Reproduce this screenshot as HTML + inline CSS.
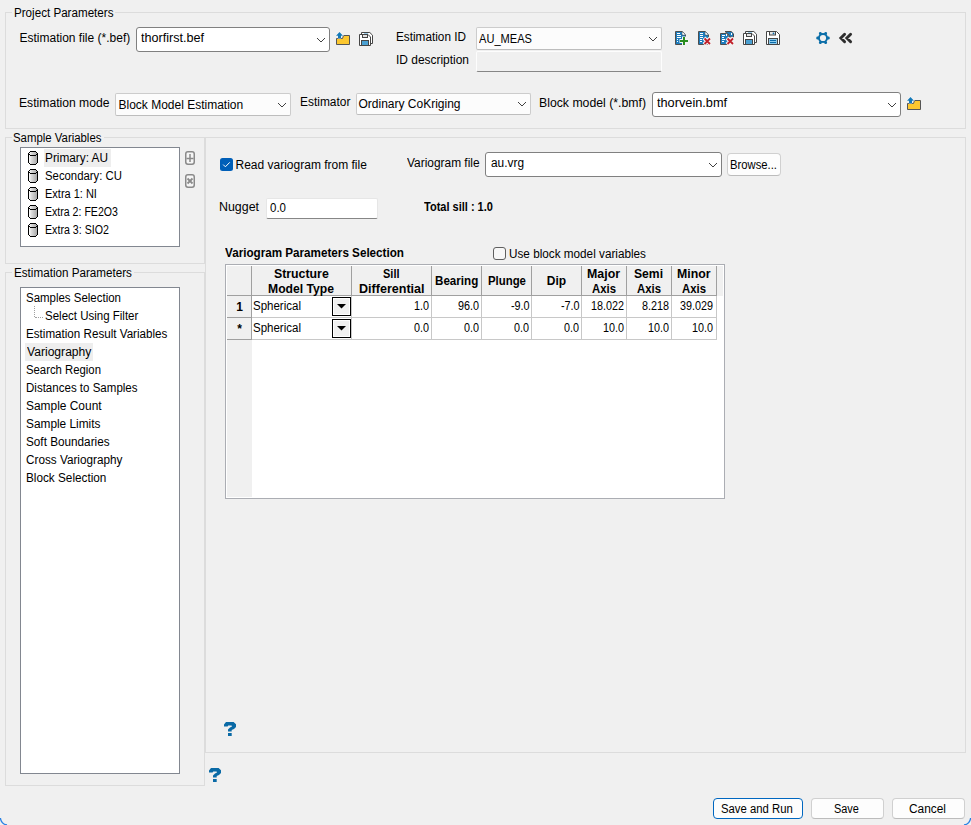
<!DOCTYPE html>
<html><head><meta charset="utf-8"><style>
html,body{margin:0;padding:0}
body{width:971px;height:825px;background:#f0f0f0;position:relative;overflow:hidden;font-family:"Liberation Sans",sans-serif;font-size:12px;color:#000}
.a{position:absolute}
.t{position:absolute;white-space:nowrap;line-height:14px;transform-origin:0 0;font-size:12px}
</style></head><body>
<div class="a" style="left:205px;top:137px;width:761px;height:616px;box-sizing:border-box;border:1px solid #dcdcdc"></div>
<div class="a" style="left:5px;top:12px;width:961px;height:117px;box-sizing:border-box;border:1px solid #dcdcdc"></div>
<div class="a" style="left:12px;top:12px;width:103px;height:1px;background:#f0f0f0"></div>
<div class="a" style="left:5px;top:137px;width:200px;height:127px;box-sizing:border-box;border:1px solid #dcdcdc"></div>
<div class="a" style="left:12px;top:137px;width:92px;height:1px;background:#f0f0f0"></div>
<div class="a" style="left:5px;top:272px;width:200px;height:514px;box-sizing:border-box;border:1px solid #dcdcdc"></div>
<div class="a" style="left:12px;top:272px;width:122px;height:1px;background:#f0f0f0"></div>
<div class="a" style="left:136px;top:27px;width:194px;height:25px;box-sizing:border-box;border:1px solid #808080;border-radius:3px;background:#fff"></div>
<svg class="a" style="left:316px;top:37px" width="10" height="6" viewBox="0 0 10 6"><path d="M1 1 L5 5 L9 1" fill="none" stroke="#404040" stroke-width="1"/></svg>
<div class="a" style="left:476px;top:27px;width:186px;height:23px;box-sizing:border-box;border:1px solid #cccccc;border-bottom-color:#bdbdbd;border-radius:2px;background:#fcfcfc"></div>
<svg class="a" style="left:648px;top:36px" width="10" height="6" viewBox="0 0 10 6"><path d="M1 1 L5 5 L9 1" fill="none" stroke="#404040" stroke-width="1"/></svg>
<div class="a" style="left:476px;top:51px;width:186px;height:21px;box-sizing:border-box;border:1px solid #fdfdfd;border-bottom:1px solid #868686;border-radius:2px;background:#f0f0f0"></div>
<div class="a" style="left:115px;top:93px;width:176px;height:23px;box-sizing:border-box;border:1px solid #cccccc;border-bottom-color:#bdbdbd;border-radius:2px;background:#fcfcfc"></div>
<svg class="a" style="left:277px;top:102px" width="10" height="6" viewBox="0 0 10 6"><path d="M1 1 L5 5 L9 1" fill="none" stroke="#404040" stroke-width="1"/></svg>
<div class="a" style="left:356px;top:93px;width:175px;height:22px;box-sizing:border-box;border:1px solid #cccccc;border-bottom-color:#bdbdbd;border-radius:2px;background:#fcfcfc"></div>
<svg class="a" style="left:517px;top:101px" width="10" height="6" viewBox="0 0 10 6"><path d="M1 1 L5 5 L9 1" fill="none" stroke="#404040" stroke-width="1"/></svg>
<div class="a" style="left:652px;top:92px;width:249px;height:25px;box-sizing:border-box;border:1px solid #808080;border-radius:3px;background:#fff"></div>
<svg class="a" style="left:887px;top:102px" width="10" height="6" viewBox="0 0 10 6"><path d="M1 1 L5 5 L9 1" fill="none" stroke="#404040" stroke-width="1"/></svg>
<div class="a" style="left:20px;top:147px;width:160px;height:100px;box-sizing:border-box;border:1px solid #828790;background:#fff"></div>
<div class="a" style="left:44px;top:149px;width:67px;height:18px;background:#eeeeee"></div>
<svg class="a" style="left:28px;top:151px" width="10" height="14" viewBox="0 0 10 14" shape-rendering="crispEdges">
<defs><linearGradient id="cg0" x1="0" x2="1"><stop offset="0" stop-color="#ffffff"/><stop offset="0.3" stop-color="#dcdcdc"/><stop offset="1" stop-color="#a8a8a8"/></linearGradient></defs>
<rect x="1" y="1" width="8" height="12" fill="url(#cg0)"/>
<rect x="2" y="0" width="6" height="1" fill="#000"/><rect x="1" y="1" width="1" height="1" fill="#000"/><rect x="8" y="1" width="1" height="1" fill="#000"/>
<rect x="0" y="2" width="1" height="10" fill="#000"/><rect x="9" y="2" width="1" height="10" fill="#000"/>
<rect x="1" y="3" width="1" height="1" fill="#000"/><rect x="8" y="3" width="1" height="1" fill="#000"/>
<rect x="2" y="4" width="6" height="1" fill="#000"/>
<rect x="1" y="12" width="1" height="1" fill="#000"/><rect x="8" y="12" width="1" height="1" fill="#000"/>
<rect x="2" y="13" width="6" height="1" fill="#000"/></svg>
<svg class="a" style="left:28px;top:169px" width="10" height="14" viewBox="0 0 10 14" shape-rendering="crispEdges">
<defs><linearGradient id="cg1" x1="0" x2="1"><stop offset="0" stop-color="#ffffff"/><stop offset="0.3" stop-color="#dcdcdc"/><stop offset="1" stop-color="#a8a8a8"/></linearGradient></defs>
<rect x="1" y="1" width="8" height="12" fill="url(#cg1)"/>
<rect x="2" y="0" width="6" height="1" fill="#000"/><rect x="1" y="1" width="1" height="1" fill="#000"/><rect x="8" y="1" width="1" height="1" fill="#000"/>
<rect x="0" y="2" width="1" height="10" fill="#000"/><rect x="9" y="2" width="1" height="10" fill="#000"/>
<rect x="1" y="3" width="1" height="1" fill="#000"/><rect x="8" y="3" width="1" height="1" fill="#000"/>
<rect x="2" y="4" width="6" height="1" fill="#000"/>
<rect x="1" y="12" width="1" height="1" fill="#000"/><rect x="8" y="12" width="1" height="1" fill="#000"/>
<rect x="2" y="13" width="6" height="1" fill="#000"/></svg>
<svg class="a" style="left:28px;top:187px" width="10" height="14" viewBox="0 0 10 14" shape-rendering="crispEdges">
<defs><linearGradient id="cg2" x1="0" x2="1"><stop offset="0" stop-color="#ffffff"/><stop offset="0.3" stop-color="#dcdcdc"/><stop offset="1" stop-color="#a8a8a8"/></linearGradient></defs>
<rect x="1" y="1" width="8" height="12" fill="url(#cg2)"/>
<rect x="2" y="0" width="6" height="1" fill="#000"/><rect x="1" y="1" width="1" height="1" fill="#000"/><rect x="8" y="1" width="1" height="1" fill="#000"/>
<rect x="0" y="2" width="1" height="10" fill="#000"/><rect x="9" y="2" width="1" height="10" fill="#000"/>
<rect x="1" y="3" width="1" height="1" fill="#000"/><rect x="8" y="3" width="1" height="1" fill="#000"/>
<rect x="2" y="4" width="6" height="1" fill="#000"/>
<rect x="1" y="12" width="1" height="1" fill="#000"/><rect x="8" y="12" width="1" height="1" fill="#000"/>
<rect x="2" y="13" width="6" height="1" fill="#000"/></svg>
<svg class="a" style="left:28px;top:205px" width="10" height="14" viewBox="0 0 10 14" shape-rendering="crispEdges">
<defs><linearGradient id="cg3" x1="0" x2="1"><stop offset="0" stop-color="#ffffff"/><stop offset="0.3" stop-color="#dcdcdc"/><stop offset="1" stop-color="#a8a8a8"/></linearGradient></defs>
<rect x="1" y="1" width="8" height="12" fill="url(#cg3)"/>
<rect x="2" y="0" width="6" height="1" fill="#000"/><rect x="1" y="1" width="1" height="1" fill="#000"/><rect x="8" y="1" width="1" height="1" fill="#000"/>
<rect x="0" y="2" width="1" height="10" fill="#000"/><rect x="9" y="2" width="1" height="10" fill="#000"/>
<rect x="1" y="3" width="1" height="1" fill="#000"/><rect x="8" y="3" width="1" height="1" fill="#000"/>
<rect x="2" y="4" width="6" height="1" fill="#000"/>
<rect x="1" y="12" width="1" height="1" fill="#000"/><rect x="8" y="12" width="1" height="1" fill="#000"/>
<rect x="2" y="13" width="6" height="1" fill="#000"/></svg>
<svg class="a" style="left:28px;top:223px" width="10" height="14" viewBox="0 0 10 14" shape-rendering="crispEdges">
<defs><linearGradient id="cg4" x1="0" x2="1"><stop offset="0" stop-color="#ffffff"/><stop offset="0.3" stop-color="#dcdcdc"/><stop offset="1" stop-color="#a8a8a8"/></linearGradient></defs>
<rect x="1" y="1" width="8" height="12" fill="url(#cg4)"/>
<rect x="2" y="0" width="6" height="1" fill="#000"/><rect x="1" y="1" width="1" height="1" fill="#000"/><rect x="8" y="1" width="1" height="1" fill="#000"/>
<rect x="0" y="2" width="1" height="10" fill="#000"/><rect x="9" y="2" width="1" height="10" fill="#000"/>
<rect x="1" y="3" width="1" height="1" fill="#000"/><rect x="8" y="3" width="1" height="1" fill="#000"/>
<rect x="2" y="4" width="6" height="1" fill="#000"/>
<rect x="1" y="12" width="1" height="1" fill="#000"/><rect x="8" y="12" width="1" height="1" fill="#000"/>
<rect x="2" y="13" width="6" height="1" fill="#000"/></svg>
<svg class="a" style="left:185px;top:151px" width="10" height="14" viewBox="0 0 10 14">
<rect x="0.75" y="0.75" width="8.5" height="12.5" rx="2.2" fill="#f6f6f6" stroke="#8a8a8a" stroke-width="1.5"/>
<path d="M5 3 V11 M1.5 7.5 H8.5" stroke="#8a8a8a" stroke-width="1.5"/></svg>
<svg class="a" style="left:185px;top:174px" width="10" height="14" viewBox="0 0 10 14">
<rect x="0.75" y="0.75" width="8.5" height="12.5" rx="2.2" fill="#f6f6f6" stroke="#8a8a8a" stroke-width="1.5"/>
<path d="M2.5 4.5 L7.5 9.5 M7.5 4.5 L2.5 9.5" stroke="#8a8a8a" stroke-width="1.8"/></svg>
<div class="a" style="left:20px;top:287px;width:160px;height:487px;box-sizing:border-box;border:1px solid #828790;background:#fff"></div>
<div class="a" style="left:25px;top:343px;width:68px;height:18px;background:#eeeeee"></div>
<div class="a" style="left:34px;top:306px;width:0;height:11px;border-left:1px dotted #a0a0a0"></div>
<div class="a" style="left:35px;top:317px;width:8px;height:0;border-top:1px dotted #a0a0a0"></div>
<svg class="a" style="left:220px;top:158px" width="13" height="13" viewBox="0 0 13 13">
<rect x="0" y="0" width="13" height="13" rx="2.5" fill="#005fb8"/>
<path d="M3.2 6.6 L5.4 8.8 L9.8 4.3" fill="none" stroke="#fff" stroke-width="1"/></svg>
<div class="a" style="left:485px;top:152px;width:237px;height:25px;box-sizing:border-box;border:1px solid #808080;border-radius:3px;background:#fff"></div>
<svg class="a" style="left:708px;top:162px" width="10" height="6" viewBox="0 0 10 6"><path d="M1 1 L5 5 L9 1" fill="none" stroke="#404040" stroke-width="1"/></svg>
<div class="a" style="left:727px;top:153px;width:54px;height:23px;box-sizing:border-box;border:1px solid #d0d0d0;border-bottom-color:#bcbcbc;border-radius:4px;background:#fdfdfd"></div>
<div class="a" style="left:266px;top:198px;width:112px;height:21px;box-sizing:border-box;border:1px solid #e6e6e6;border-bottom:1px solid #868686;border-radius:2px;background:#fff"></div>
<svg class="a" style="left:493px;top:247px" width="13" height="13" viewBox="0 0 13 13">
<rect x="0.5" y="0.5" width="12" height="12" rx="2.5" fill="#f7f7f7" stroke="#5f5f5f"/></svg>
<div class="a" style="left:225px;top:264px;width:500px;height:235px;box-sizing:border-box;border:1px solid #abadb3;background:#fff"></div>
<div class="a" style="left:227px;top:266px;width:496px;height:30px;background:#f0f0f0"></div>
<div class="a" style="left:227px;top:266px;width:25px;height:231px;background:#f0f0f0"></div>
<div class="a" style="left:251px;top:266px;width:1px;height:30px;background:#a0a0a0"></div>
<div class="a" style="left:351px;top:266px;width:1px;height:30px;background:#a0a0a0"></div>
<div class="a" style="left:431px;top:266px;width:1px;height:30px;background:#a0a0a0"></div>
<div class="a" style="left:481px;top:266px;width:1px;height:30px;background:#a0a0a0"></div>
<div class="a" style="left:531px;top:266px;width:1px;height:30px;background:#a0a0a0"></div>
<div class="a" style="left:581px;top:266px;width:1px;height:30px;background:#a0a0a0"></div>
<div class="a" style="left:626px;top:266px;width:1px;height:30px;background:#a0a0a0"></div>
<div class="a" style="left:671px;top:266px;width:1px;height:30px;background:#a0a0a0"></div>
<div class="a" style="left:716px;top:266px;width:1px;height:30px;background:#a0a0a0"></div>
<div class="a" style="left:227px;top:295px;width:490px;height:1px;background:#a0a0a0"></div>
<div class="a" style="left:227px;top:317px;width:25px;height:1px;background:#a0a0a0"></div>
<div class="a" style="left:252px;top:317px;width:465px;height:1px;background:#c8c8c8"></div>
<div class="a" style="left:227px;top:339px;width:25px;height:1px;background:#a0a0a0"></div>
<div class="a" style="left:252px;top:339px;width:465px;height:1px;background:#c8c8c8"></div>
<div class="a" style="left:251px;top:296px;width:1px;height:44px;background:#a0a0a0"></div>
<div class="a" style="left:351px;top:296px;width:1px;height:44px;background:#c8c8c8"></div>
<div class="a" style="left:431px;top:296px;width:1px;height:44px;background:#c8c8c8"></div>
<div class="a" style="left:481px;top:296px;width:1px;height:44px;background:#c8c8c8"></div>
<div class="a" style="left:531px;top:296px;width:1px;height:44px;background:#c8c8c8"></div>
<div class="a" style="left:581px;top:296px;width:1px;height:44px;background:#c8c8c8"></div>
<div class="a" style="left:626px;top:296px;width:1px;height:44px;background:#c8c8c8"></div>
<div class="a" style="left:671px;top:296px;width:1px;height:44px;background:#c8c8c8"></div>
<div class="a" style="left:716px;top:296px;width:1px;height:44px;background:#c8c8c8"></div>
<svg class="a" style="left:332px;top:297px" width="19" height="19" viewBox="0 0 19 19" shape-rendering="crispEdges">
<rect x="0" y="0" width="19" height="19" fill="#000"/><rect x="1" y="1" width="17" height="17" fill="#fff"/><rect x="2" y="2" width="15" height="15" fill="#f0f0f0"/>
<path d="M5 7 H14 L9.5 11.5 Z" fill="#000" shape-rendering="geometricPrecision"/></svg>
<svg class="a" style="left:332px;top:319px" width="19" height="19" viewBox="0 0 19 19" shape-rendering="crispEdges">
<rect x="0" y="0" width="19" height="19" fill="#000"/><rect x="1" y="1" width="17" height="17" fill="#fff"/><rect x="2" y="2" width="15" height="15" fill="#f0f0f0"/>
<path d="M5 7 H14 L9.5 11.5 Z" fill="#000" shape-rendering="geometricPrecision"/></svg>
<svg class="a" style="left:221px;top:719px" width="18" height="20" viewBox="0 0 18 20"><path d="M3 7.6 L3 5.4 L5 3 L12.6 3 L15 5.2 L15 8 L13 10 L10.7 11 L10.7 12.6 L7 12.6 L7 10.4 L9 8.6 L11 7.6 L10.6 6.6 L7.2 6.6 L6.6 7.6 Z" fill="#0a6aa6"/><rect x="7" y="14" width="3.7" height="3" fill="#0a6aa6"/></svg>
<svg class="a" style="left:206px;top:765px" width="18" height="20" viewBox="0 0 18 20"><path d="M3 7.6 L3 5.4 L5 3 L12.6 3 L15 5.2 L15 8 L13 10 L10.7 11 L10.7 12.6 L7 12.6 L7 10.4 L9 8.6 L11 7.6 L10.6 6.6 L7.2 6.6 L6.6 7.6 Z" fill="#0a6aa6"/><rect x="7" y="14" width="3.7" height="3" fill="#0a6aa6"/></svg>
<div class="a" style="left:713px;top:798px;width:90px;height:21px;box-sizing:border-box;border:1px solid #0067c0;border-radius:4px;background:#fdfdfd"></div>
<div class="a" style="left:811px;top:798px;width:73px;height:21px;box-sizing:border-box;border:1px solid #d0d0d0;border-bottom-color:#bcbcbc;border-radius:4px;background:#fdfdfd"></div>
<div class="a" style="left:892px;top:798px;width:73px;height:21px;box-sizing:border-box;border:1px solid #d0d0d0;border-bottom-color:#bcbcbc;border-radius:4px;background:#fdfdfd"></div>
<svg class="a" style="left:0;top:815px" width="12" height="10" viewBox="0 0 12 10"><path d="M0.4 3 Q1 9 7 10" fill="none" stroke="#2a82e4" stroke-width="1.3"/></svg>
<svg class="a" style="left:959px;top:815px" width="12" height="10" viewBox="0 0 12 10"><path d="M11.6 3 Q11 9 5 10" fill="none" stroke="#2a82e4" stroke-width="1.3"/></svg>
<svg class="a" style="left:673px;top:29px" width="18" height="18" viewBox="0 0 18 18">
<path d="M2.5 2.5 H9.2 L12.5 5.8 V15.5 H2.5 Z" fill="#1d7cbd" stroke="#4e4e4e"/>
<path d="M9.3 3 V6 H12" fill="#fff" stroke="#4e4e4e" stroke-width="0.8"/>
<path d="M9.3 3.3 L11.8 5.6 H9.3 Z" fill="#fff"/>
<rect x="4" y="4" width="3" height="1" fill="#fff"/><rect x="4" y="6" width="4" height="1" fill="#fff"/><rect x="4" y="8" width="4" height="1" fill="#fff"/>
<rect x="4" y="10" width="1" height="1" fill="#fff"/><rect x="4" y="12" width="1" height="1" fill="#fff"/>
<path d="M11 7.5 V16.5 M6.5 12 H15.5" stroke="#f4f4f4" stroke-width="4"/>
<path d="M11 8 V16 M7 12 H15" stroke="#2a8c1f" stroke-width="2"/>
</svg>
<svg class="a" style="left:696px;top:29px" width="18" height="18" viewBox="0 0 18 18">
<path d="M2.5 2.5 H9.2 L12.5 5.8 V15.5 H2.5 Z" fill="#1d7cbd" stroke="#4e4e4e"/>
<path d="M9.3 3 V6 H12" fill="#fff" stroke="#4e4e4e" stroke-width="0.8"/>
<path d="M9.3 3.3 L11.8 5.6 H9.3 Z" fill="#fff"/>
<rect x="4" y="4" width="3" height="1" fill="#fff"/><rect x="4" y="6" width="3" height="1" fill="#fff"/><rect x="4" y="8" width="3" height="1" fill="#fff"/>
<rect x="4" y="10" width="2" height="1" fill="#fff"/><rect x="4" y="12" width="2" height="1" fill="#fff"/>
<path d="M8 9 L14.5 15.5 M14.5 9 L8 15.5" stroke="#f4f4f4" stroke-width="4"/>
<path d="M8.5 9.5 L14 15 M14 9.5 L8.5 15" stroke="#c0202a" stroke-width="1.8"/>
</svg>
<svg class="a" style="left:718px;top:28px" width="18" height="18" viewBox="0 0 18 18">
<path d="M7 3.5 H13.2 L15.5 5.8 V9 H11 V7 Z" fill="#1d7cbd" stroke="#4e4e4e"/>
<path d="M2.5 5.5 H8.2 L10.5 7.8 V16.5 H2.5 Z" fill="#1d7cbd" stroke="#4e4e4e"/>
<rect x="8" y="6" width="1" height="2" fill="#fff"/><rect x="13" y="5" width="1" height="2" fill="#fff"/>
<rect x="4" y="7" width="3" height="1" fill="#fff"/><rect x="4" y="9" width="2" height="1" fill="#fff"/><rect x="4" y="11" width="3" height="1" fill="#fff"/><rect x="4" y="13" width="2" height="1" fill="#fff"/>
<path d="M9 10 L15.5 16.5 M15.5 10 L9 16.5" stroke="#f4f4f4" stroke-width="4"/>
<path d="M9.5 10.5 L15 16 M15 10.5 L9.5 16" stroke="#c0202a" stroke-width="1.8"/>
</svg>
<svg class="a" style="left:741px;top:29px" width="18" height="18" viewBox="0 0 18 18">
<path d="M4.5 2.5 H12.8 L15.5 5.2 V13.5 H4.5 Z" fill="#fff" stroke="#454545"/>
<rect x="7" y="3" width="4" height="1" fill="#9ccbe6"/>
<path d="M2.5 4.5 H11 L13.5 7 V15.5 H2.5 Z" fill="#fff" stroke="#454545"/>
<rect x="5.5" y="4.5" width="5" height="3" fill="#e4e4e4" stroke="#454545"/>
<rect x="4.5" y="10.5" width="7" height="5" fill="#4aa0d2" stroke="#454545"/>
</svg>
<svg class="a" style="left:764px;top:29px" width="18" height="18" viewBox="0 0 18 18">
<path d="M2.5 2.5 H12.5 L15.5 5.5 V15.5 H2.5 Z" fill="#fff" stroke="#454545"/>
<rect x="5.5" y="2.5" width="6" height="3.5" fill="#e6e6e6" stroke="#454545"/>
<circle cx="9.5" cy="4.4" r="0.9" fill="#0b6aa8"/>
<rect x="4.5" y="9.5" width="9" height="6" fill="#8dcbec" stroke="#454545"/>
<rect x="6" y="11" width="6" height="1" fill="#0b6aa8"/><rect x="6" y="13" width="6" height="1" fill="#0b6aa8"/>
</svg>
<svg class="a" style="left:814px;top:29px" width="18" height="18" viewBox="0 0 18 18">
<g fill="#0b6ea8">
<circle cx="9" cy="9" r="5"/>
<rect x="2.3" y="7.6" width="3" height="2.8" rx="1.2" transform="rotate(0 9 9)"/><rect x="2.3" y="7.6" width="3" height="2.8" rx="1.2" transform="rotate(60 9 9)"/><rect x="2.3" y="7.6" width="3" height="2.8" rx="1.2" transform="rotate(120 9 9)"/><rect x="2.3" y="7.6" width="3" height="2.8" rx="1.2" transform="rotate(180 9 9)"/><rect x="2.3" y="7.6" width="3" height="2.8" rx="1.2" transform="rotate(240 9 9)"/><rect x="2.3" y="7.6" width="3" height="2.8" rx="1.2" transform="rotate(300 9 9)"/>
</g>
<circle cx="9" cy="9" r="3.1" fill="#f0f0f0"/>
</svg>
<svg class="a" style="left:837px;top:29px" width="18" height="18" viewBox="0 0 18 18">
<path d="M7.6 5.3 L3.9 9 L7.6 12.7 M13.6 5.3 L9.9 9 L13.6 12.7" fill="none" stroke="#2e2e2e" stroke-width="2.9" stroke-linecap="round" stroke-linejoin="miter"/>
</svg>
<svg class="a" style="left:333px;top:29px" width="18" height="18" viewBox="0 0 18 18">
<path d="M3.5 9.5 H9.5 L10.5 6.5 H16.5 V15.5 H3.5 Z" fill="#fcc72f" stroke="#555"/>
<path d="M6.5 2.2 L10.8 6.8 H8.2 V9.5 H4.8 V6.8 H2.2 Z" fill="#f6f6f6"/><path d="M6.5 3 L10 6.7 H8 V9.3 H5 V6.7 H3 Z" fill="#1479b8"/>
</svg>
<svg class="a" style="left:357px;top:30px" width="18" height="18" viewBox="0 0 18 18">
<path d="M4.5 2.5 H12.8 L15.5 5.2 V13.5 H4.5 Z" fill="#fff" stroke="#454545"/>
<rect x="7" y="3" width="4" height="1" fill="#9ccbe6"/>
<path d="M2.5 4.5 H11 L13.5 7 V15.5 H2.5 Z" fill="#fff" stroke="#454545"/>
<rect x="5.5" y="4.5" width="5" height="3" fill="#e4e4e4" stroke="#454545"/>
<rect x="4.5" y="10.5" width="7" height="5" fill="#4aa0d2" stroke="#454545"/>
</svg>
<svg class="a" style="left:904px;top:94px" width="18" height="18" viewBox="0 0 18 18">
<path d="M3.5 9.5 H9.5 L10.5 6.5 H16.5 V15.5 H3.5 Z" fill="#fcc72f" stroke="#555"/>
<path d="M6.5 2.2 L10.8 6.8 H8.2 V9.5 H4.8 V6.8 H2.2 Z" fill="#f6f6f6"/><path d="M6.5 3 L10 6.7 H8 V9.3 H5 V6.7 H3 Z" fill="#1479b8"/>
</svg>

<div class="t" style="left:13.53px;top:6.00px;font-weight:400;transform:scaleX(0.9685);">Project Parameters</div>
<div class="t" style="left:13.05px;top:131.00px;font-weight:400;transform:scaleX(0.9493);">Sample Variables</div>
<div class="t" style="left:13.53px;top:266.00px;font-weight:400;transform:scaleX(0.9718);">Estimation Parameters</div>
<div class="t" style="left:140.95px;top:31.00px;font-weight:400;transform:scaleX(1.0503);">thorfirst.bef</div>
<div class="t" style="left:478.58px;top:32.00px;font-weight:400;transform:scaleX(0.9227);">AU_MEAS</div>
<div class="t" style="left:19.50px;top:31.00px;font-weight:400;">Estimation file (*.bef)</div>
<div class="t" style="left:396.02px;top:30.00px;font-weight:400;transform:scaleX(0.9807);">Estimation ID</div>
<div class="t" style="left:396.01px;top:53.00px;font-weight:400;transform:scaleX(0.9948);">ID description</div>
<div class="t" style="left:19.49px;top:95.50px;font-weight:400;transform:scaleX(1.0127);">Estimation mode</div>
<div class="t" style="left:118.50px;top:97.50px;font-weight:400;">Block Model Estimation</div>
<div class="t" style="left:299.51px;top:95.00px;font-weight:400;transform:scaleX(0.9942);">Estimator</div>
<div class="t" style="left:358.50px;top:97.00px;font-weight:400;">Ordinary CoKriging</div>
<div class="t" style="left:539.48px;top:95.50px;font-weight:400;transform:scaleX(1.0221);">Block model (*.bmf)</div>
<div class="t" style="left:656.94px;top:96.00px;font-weight:400;transform:scaleX(1.0610);">thorvein.bmf</div>
<div class="t" style="left:45.32px;top:151.00px;font-weight:400;transform:scaleX(0.9839);">Primary: AU</div>
<div class="t" style="left:45.35px;top:169.00px;font-weight:400;transform:scaleX(0.9456);">Secondary: CU</div>
<div class="t" style="left:45.38px;top:187.00px;font-weight:400;transform:scaleX(0.9158);">Extra 1: NI</div>
<div class="t" style="left:45.42px;top:205.00px;font-weight:400;transform:scaleX(0.8812);">Extra 2: FE2O3</div>
<div class="t" style="left:45.41px;top:223.00px;font-weight:400;transform:scaleX(0.8869);">Extra 3: SIO2</div>
<div class="t" style="left:26.34px;top:291.00px;font-weight:400;transform:scaleX(0.9554);">Samples Selection</div>
<div class="t" style="left:26.33px;top:327.00px;font-weight:400;transform:scaleX(0.9693);">Estimation Result Variables</div>
<div class="t" style="left:27.29px;top:345.00px;font-weight:400;transform:scaleX(1.0091);">Variography</div>
<div class="t" style="left:26.36px;top:363.00px;font-weight:400;transform:scaleX(0.9440);">Search Region</div>
<div class="t" style="left:26.34px;top:381.00px;font-weight:400;transform:scaleX(0.9612);">Distances to Samples</div>
<div class="t" style="left:26.31px;top:399.00px;font-weight:400;transform:scaleX(0.9940);">Sample Count</div>
<div class="t" style="left:26.31px;top:417.00px;font-weight:400;transform:scaleX(0.9884);">Sample Limits</div>
<div class="t" style="left:26.32px;top:435.00px;font-weight:400;transform:scaleX(0.9788);">Soft Boundaries</div>
<div class="t" style="left:26.32px;top:453.00px;font-weight:400;transform:scaleX(0.9786);">Cross Variography</div>
<div class="t" style="left:26.32px;top:471.00px;font-weight:400;transform:scaleX(0.9797);">Block Selection</div>
<div class="t" style="left:45.34px;top:309.00px;font-weight:400;transform:scaleX(0.9588);">Select Using Filter</div>
<div class="t" style="left:235.50px;top:157.50px;font-weight:400;">Read variogram from file</div>
<div class="t" style="left:406.51px;top:156.00px;font-weight:400;transform:scaleX(0.9925);">Variogram file</div>
<div class="t" style="left:490.51px;top:156.00px;font-weight:400;transform:scaleX(0.9889);">au.vrg</div>
<div class="t" style="left:729.86px;top:158.00px;font-weight:400;transform:scaleX(0.9385);">Browse...</div>
<div class="t" style="left:219.27px;top:200.00px;font-weight:400;transform:scaleX(1.0344);">Nugget</div>
<div class="t" style="left:270.04px;top:201.00px;font-weight:400;transform:scaleX(0.9562);">0.0</div>
<div class="t" style="left:424.38px;top:200.00px;font-weight:700;transform:scaleX(0.9172);">Total sill : 1.0</div>
<div class="t" style="left:224.53px;top:246.00px;font-weight:700;transform:scaleX(0.9722);">Variogram Parameters Selection</div>
<div class="t" style="left:508.52px;top:247.00px;font-weight:400;transform:scaleX(0.9780);">Use block model variables</div>
<div class="t" style="left:274.14px;top:267.00px;font-weight:700;transform:scaleX(1.0259);">Structure</div>
<div class="t" style="left:268.49px;top:281.60px;font-weight:700;transform:scaleX(1.0136);">Model Type</div>
<div class="t" style="left:383.24px;top:267.00px;font-weight:700;transform:scaleX(0.9168);">Sill</div>
<div class="t" style="left:358.73px;top:281.60px;font-weight:700;transform:scaleX(1.0456);">Differential</div>
<div class="t" style="left:434.87px;top:274.00px;font-weight:700;transform:scaleX(0.9682);">Bearing</div>
<div class="t" style="left:487.53px;top:274.00px;font-weight:700;transform:scaleX(0.9483);">Plunge</div>
<div class="t" style="left:546.85px;top:274.00px;font-weight:700;">Dip</div>
<div class="t" style="left:587.48px;top:267.00px;font-weight:700;transform:scaleX(1.0317);">Major</div>
<div class="t" style="left:592.03px;top:281.60px;font-weight:700;transform:scaleX(0.9442);">Axis</div>
<div class="t" style="left:634.49px;top:267.00px;font-weight:700;transform:scaleX(1.0113);">Semi</div>
<div class="t" style="left:637.03px;top:281.60px;font-weight:700;transform:scaleX(0.9442);">Axis</div>
<div class="t" style="left:677.24px;top:267.00px;font-weight:700;transform:scaleX(1.0261);">Minor</div>
<div class="t" style="left:682.03px;top:281.60px;font-weight:700;transform:scaleX(0.9442);">Axis</div>
<div class="t" style="left:236.26px;top:300.00px;font-weight:700;">1</div>
<div class="t" style="left:237.26px;top:322.00px;font-weight:700;">*</div>
<div class="t" style="left:253.44px;top:298.50px;font-weight:400;transform:scaleX(0.9586);">Spherical</div>
<div class="t" style="left:413.88px;top:298.50px;font-weight:400;transform:scaleX(0.9000);">1.0</div>
<div class="t" style="left:457.98px;top:298.50px;font-weight:400;transform:scaleX(0.9000);">96.0</div>
<div class="t" style="left:510.58px;top:298.50px;font-weight:400;transform:scaleX(0.9000);">-9.0</div>
<div class="t" style="left:560.58px;top:298.50px;font-weight:400;transform:scaleX(0.9000);">-7.0</div>
<div class="t" style="left:590.87px;top:298.50px;font-weight:400;transform:scaleX(0.9000);">18.022</div>
<div class="t" style="left:641.57px;top:298.50px;font-weight:400;transform:scaleX(0.9000);">8.218</div>
<div class="t" style="left:680.47px;top:298.50px;font-weight:400;transform:scaleX(0.9000);">39.029</div>
<div class="t" style="left:253.44px;top:320.50px;font-weight:400;transform:scaleX(0.9586);">Spherical</div>
<div class="t" style="left:413.88px;top:320.50px;font-weight:400;transform:scaleX(0.9000);">0.0</div>
<div class="t" style="left:463.98px;top:320.50px;font-weight:400;transform:scaleX(0.9000);">0.0</div>
<div class="t" style="left:514.18px;top:320.50px;font-weight:400;transform:scaleX(0.9000);">0.0</div>
<div class="t" style="left:564.18px;top:320.50px;font-weight:400;transform:scaleX(0.9000);">0.0</div>
<div class="t" style="left:602.88px;top:320.50px;font-weight:400;transform:scaleX(0.9000);">10.0</div>
<div class="t" style="left:647.58px;top:320.50px;font-weight:400;transform:scaleX(0.9000);">10.0</div>
<div class="t" style="left:692.48px;top:320.50px;font-weight:400;transform:scaleX(0.9000);">10.0</div>
<div class="t" style="left:721.06px;top:801.70px;font-weight:400;transform:scaleX(0.9432);">Save and Run</div>
<div class="t" style="left:834.49px;top:801.70px;font-weight:400;transform:scaleX(0.9105);">Save</div>
<div class="t" style="left:909.01px;top:801.70px;font-weight:400;transform:scaleX(0.9901);">Cancel</div>
</body></html>
